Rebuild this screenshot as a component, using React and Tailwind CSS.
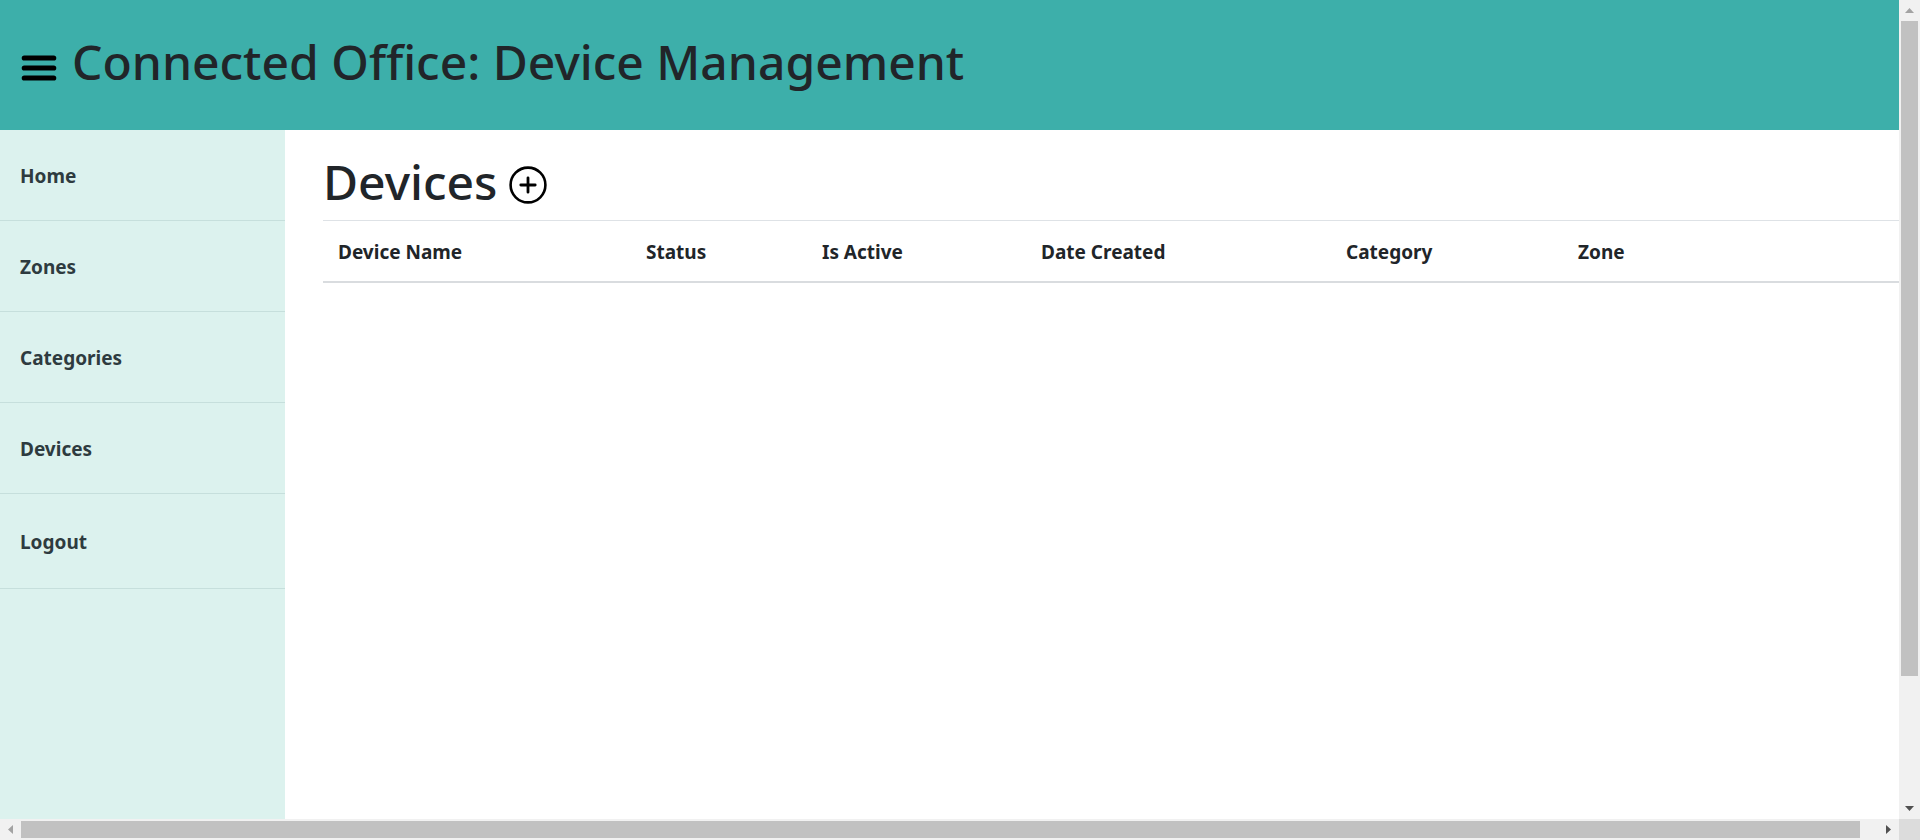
const navItems = ["Home", "Zones", "Categories", "Devices"];

const columns = [
  { label: "Device Name", width: "w-[308px]" },
  { label: "Status", width: "w-[176px]" },
  { label: "Is Active", width: "w-[219px]" },
  { label: "Date Created", width: "w-[305px]" },
  { label: "Category", width: "w-[232px]" },
  { label: "Zone", width: "" },
];

function MenuIcon() {
  return (
    <svg width="38" height="28" viewBox="0 0 38 28" fill="none" stroke="#000" strokeWidth="5.2" strokeLinecap="round" aria-hidden="true">
      <path d="M4.3 4h29.4M4.3 14h29.4M4.3 24h29.4" />
    </svg>
  );
}

function AddIcon() {
  return (
    <svg width="38" height="38" viewBox="0 0 38 38" fill="none" stroke="#000" strokeWidth="2.6" strokeLinecap="round" aria-hidden="true">
      <circle cx="19" cy="19" r="17.4" />
      <path d="M19 11.8v14.4M11.8 19h14.4" strokeWidth="2.8" />
    </svg>
  );
}

function Arrow({ points, className }) {
  return (
    <svg width="21" height="21" viewBox="0 0 21 21" className={`shrink-0 ${className}`} aria-hidden="true">
      <polygon points={points} fill="currentColor" />
    </svg>
  );
}

export default function App() {
  return (
    <div className="grid h-screen grid-cols-[minmax(0,1fr)_21px] grid-rows-[minmax(0,1fr)_21px] bg-white font-['Noto_Sans','Open_Sans',sans-serif] text-[#212529]">
      <div className="flex min-h-0 flex-col overflow-hidden">
        <header className="flex h-[130px] shrink-0 items-center gap-[14px] bg-[#3dafaa] px-5 pb-[6px]">
          <button type="button" aria-label="Toggle menu" className="pt-3">
            <MenuIcon />
          </button>
          <h1 className="text-[48px] leading-[60px] font-medium whitespace-nowrap">
            Connected Office: Device Management
          </h1>
        </header>
        <div className="flex min-h-0 flex-1">
          <nav className="flex w-[285px] shrink-0 flex-col bg-[#dcf2ee] text-[19px] leading-[30px] font-bold text-[#2e3b3f]">
            {navItems.map((label) => (
              <a key={label} href="#" className="flex h-[91px] items-center border-b border-[#c6dfdc] px-5 pt-[2px]">
                {label}
              </a>
            ))}
            <button type="button" className="flex h-[95px] items-center border-b border-[#c6dfdc] px-5 pt-[2px] text-left">
              Logout
            </button>
          </nav>
          <main className="min-w-0 flex-1 overflow-hidden pt-[22px] pl-[38px]">
            <div className="flex h-[68px] items-start gap-3">
              <h2 className="text-[48px] leading-[60px] font-medium">Devices</h2>
              <button type="button" aria-label="Add device" className="pt-[14px]">
                <AddIcon />
              </button>
            </div>
            <table className="w-[calc(100%+19px)] table-fixed border-collapse">
              <thead>
                <tr className="border-t border-b-2 border-t-[#dee2e6] border-b-[#d9dcdf]">
                  {columns.map(({ label, width }) => (
                    <th key={label} scope="col" className={`px-[15px] pt-4 pb-[14px] text-left text-[19px] leading-[30px] font-bold ${width}`}>
                      {label}
                    </th>
                  ))}
                </tr>
              </thead>
            </table>
          </main>
        </div>
      </div>
      <div className="flex flex-col items-center bg-[#f1f1f1]" aria-hidden="true">
        <Arrow points="6,13 10.5,8 15,13" className="text-[#a3a3a3]" />
        <div className="min-h-0 w-[17px] flex-[655] bg-[#c1c1c1]" />
        <div className="min-h-0 flex-[122]" />
        <Arrow points="6,8 15,8 10.5,13" className="text-[#505050]" />
      </div>
      <div className="flex items-center bg-[#f1f1f1]" aria-hidden="true">
        <Arrow points="13,6 13,15 8,10.5" className="text-[#a3a3a3]" />
        <div className="h-[17px] min-w-0 flex-1 bg-[#c1c1c1]" />
        <div className="w-[18px]" />
        <Arrow points="8,6 13,10.5 8,15" className="text-[#505050]" />
      </div>
      <div className="bg-[#dcdcdc]" />
    </div>
  );
}
